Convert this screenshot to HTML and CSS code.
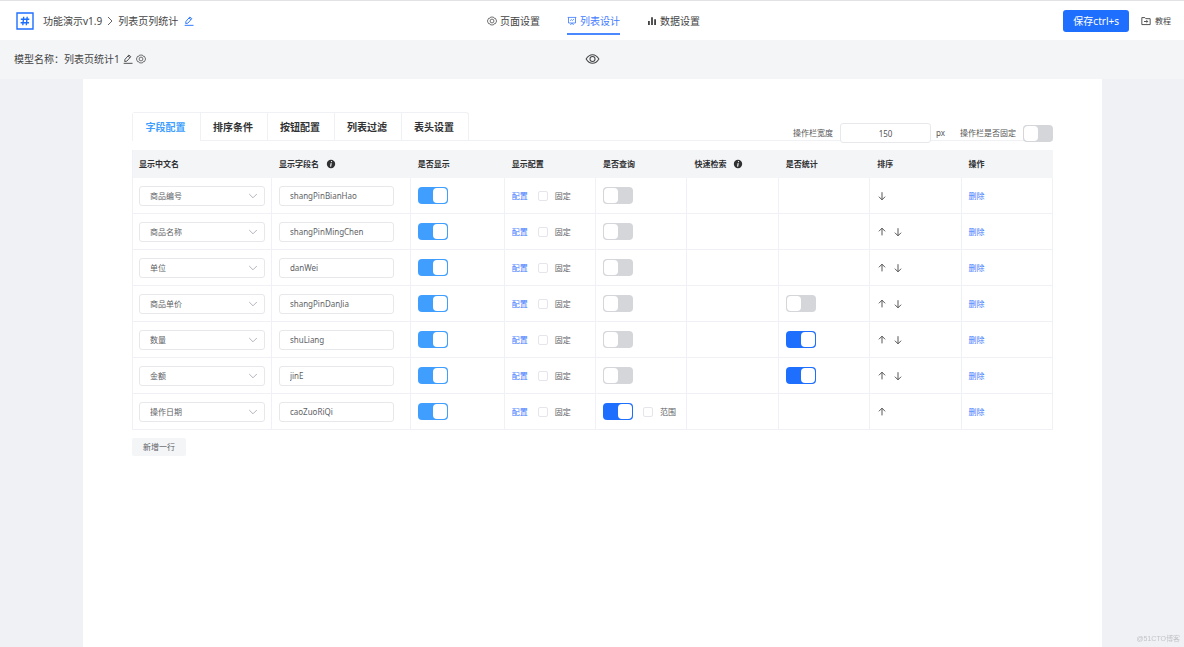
FILE: index.html
```html
<!DOCTYPE html>
<html lang="zh-CN">
<head>
<meta charset="utf-8">
<title>列表设计</title>
<link rel="stylesheet" href="styles.css">
</head>
<body>
<svg class="sprite" aria-hidden="true">
  <symbol id="i-pen" viewBox="0 0 12 12"><path d="M2 9 2.4 6.4 7 1.2 9.4 3.2 4.6 8.6 2 9ZM6 2.4 8.4 4.4M.8 11.2H11.4" fill="none" stroke="currentColor" stroke-width="1.1" stroke-linejoin="round"/></symbol>
  <symbol id="i-gear" viewBox="0 0 12 12"><path d="M4.3 1.3H7.7L8.6 2.7 10.2 2.9 11.5 6 10.2 9.1 8.6 9.3 7.7 10.7H4.3L3.4 9.3 1.8 9.1.5 6 1.8 2.9 3.4 2.7Z" fill="none" stroke="currentColor" stroke-width=".9" stroke-linejoin="round"/><circle cx="6" cy="6" r="2.3" fill="none" stroke="currentColor" stroke-width=".9"/></symbol>
  <symbol id="i-board" viewBox="0 0 12 12"><path d="M.8 1.7H11.2M1.8 1.7V8.4H10.2V1.7M4 10.8 6 8.6 8 10.8M3.8 5.6 5.2 4.3 6.4 5.4 8.3 3.7" fill="none" stroke="currentColor" stroke-width="1"/></symbol>
  <symbol id="i-bars" viewBox="0 0 12 12"><path d="M1.2 6H3.4V10.8H1.2ZM4.9 1.4H7.1V10.8H4.9ZM8.6 4H10.8V10.8H8.6Z" fill="currentColor"/></symbol>
  <symbol id="i-folder" viewBox="0 0 12 12"><path d="M1 1.9H4.6L5.8 3.2H11V10.3H1ZM3.6 6.6H8M6.5 5 8.1 6.6 6.5 8.2" fill="none" stroke="currentColor" stroke-width="1.1" stroke-linejoin="round"/></symbol>
  <symbol id="i-eye" viewBox="0 0 16 12"><path d="M1.2 6C3 3 5.3 1.4 8 1.4S13 3 14.8 6C13 9 10.7 10.6 8 10.6S3 9 1.2 6Z" fill="none" stroke="currentColor" stroke-width="1.1"/><circle cx="8" cy="6" r="2.7" fill="none" stroke="currentColor" stroke-width="1.1"/></symbol>
  <symbol id="i-down" viewBox="0 0 10 10"><path d="M5 1.2V8.8M1.9 5.7 5 8.8 8.1 5.7" fill="none" stroke="currentColor" stroke-width=".9"/></symbol>
  <symbol id="i-up" viewBox="0 0 10 10"><path d="M5 8.4V1.2M1.9 4.3 5 1.2 8.1 4.3" fill="none" stroke="currentColor" stroke-width=".9"/></symbol>
  <symbol id="i-chev" viewBox="0 0 10 10"><path d="M1.2 3 5 6.8 8.8 3" fill="none" stroke="currentColor" stroke-width=".9"/></symbol>
  <symbol id="i-right" viewBox="0 0 10 10"><path d="M3 1 7 5 3 9" fill="none" stroke="currentColor" stroke-width="1"/></symbol>
  <symbol id="i-info" viewBox="0 0 10 10"><circle cx="5" cy="5" r="4.2" fill="currentColor"/><path d="M5.6 2.2 5.4 3.2M5.2 4.2 4.6 7.6" stroke="#fff" stroke-width="1.1"/></symbol>
  <symbol id="i-logo" viewBox="0 0 18 18"><path d="M1 1H17V17H1Z" fill="#fff" stroke="currentColor" stroke-width="1.4"/><path d="M7.7 4.8 6.8 13.2M11.2 4.8 10.3 13.2M4.8 7.3H13.3M4.6 10.7H13" fill="none" stroke="currentColor" stroke-width="1.4"/></symbol>
</svg>

<header class="topbar">
  <div class="crumbs">
    <svg class="logo"><use href="#i-logo"/></svg>
    <span>功能演示v1.9</span>
    <svg class="icon-s muted"><use href="#i-right"/></svg>
    <span>列表页列统计</span>
    <button class="icon-btn blue" aria-label="编辑"><svg class="icon-s"><use href="#i-pen"/></svg></button>
  </div>
  <nav class="steps">
    <a href="#page"><svg class="icon-s"><use href="#i-gear"/></svg>页面设置</a>
    <a href="#list" class="active"><svg class="icon-s"><use href="#i-board"/></svg>列表设计</a>
    <a href="#data"><svg class="icon-s"><use href="#i-bars"/></svg>数据设置</a>
  </nav>
  <div class="actions">
    <button class="save">保存ctrl+s</button>
    <a class="guide" href="#guide"><svg class="icon-s"><use href="#i-folder"/></svg>教程</a>
  </div>
</header>

<div class="subbar">
  <div class="model">
    <span>模型名称：列表页统计1</span>
    <button class="icon-btn" aria-label="编辑模型"><svg class="icon-s"><use href="#i-pen"/></svg></button>
    <button class="icon-btn" aria-label="设置模型"><svg class="icon-s"><use href="#i-gear"/></svg></button>
  </div>
  <button class="icon-btn" aria-label="预览"><svg class="eye"><use href="#i-eye"/></svg></button>
</div>

<main class="panel">
  <div class="tabbar">
    <div class="tabs" role="tablist">
      <button role="tab" class="tab active" aria-selected="true">字段配置</button>
      <button role="tab" class="tab">排序条件</button>
      <button role="tab" class="tab">按钮配置</button>
      <button role="tab" class="tab">列表过滤</button>
      <button role="tab" class="tab">表头设置</button>
    </div>
    <div class="options">
      <label for="bar-width">操作栏宽度</label>
      <input id="bar-width" class="field width" value="150">
      <span class="unit">px</span>
      <label for="bar-fixed">操作栏是否固定</label>
      <input id="bar-fixed" class="switch" type="checkbox" role="switch">
    </div>
  </div>

  <table class="fields">
    <colgroup><col class="c-wide"><col class="c-wide"><col class="c-show"><col><col><col><col><col><col></colgroup>
    <thead>
      <tr><th>显示中文名</th><th><span class="hint">显示字段名<svg class="icon-s"><use href="#i-info"/></svg></span></th><th>是否显示</th><th>显示配置</th><th>是否查询</th><th><span class="hint">快速检索<svg class="icon-s"><use href="#i-info"/></svg></span></th><th>是否统计</th><th>排序</th><th>操作</th></tr>
    </thead>
    <tbody>
      <tr>
        <td><div class="pick"><select class="field" aria-label="显示中文名"><option>商品编号</option></select><svg class="icon-s"><use href="#i-chev"/></svg></div></td>
        <td><input class="field name" aria-label="显示字段名" value="shangPinBianHao"></td>
        <td><input class="switch sky" type="checkbox" role="switch" aria-label="是否显示" checked></td>
        <td><div class="set"><a href="#set">配置</a><label><input class="tick" type="checkbox">固定</label></div></td>
        <td><input class="switch" type="checkbox" role="switch" aria-label="是否查询"></td>
        <td></td><td></td>
        <td><div class="order"><button class="icon-btn" aria-label="下移"><svg class="icon-s"><use href="#i-down"/></svg></button></div></td>
        <td><a href="#del">删除</a></td>
      </tr>
      <tr>
        <td><div class="pick"><select class="field" aria-label="显示中文名"><option>商品名称</option></select><svg class="icon-s"><use href="#i-chev"/></svg></div></td>
        <td><input class="field name" aria-label="显示字段名" value="shangPinMingChen"></td>
        <td><input class="switch sky" type="checkbox" role="switch" aria-label="是否显示" checked></td>
        <td><div class="set"><a href="#set">配置</a><label><input class="tick" type="checkbox">固定</label></div></td>
        <td><input class="switch" type="checkbox" role="switch" aria-label="是否查询"></td>
        <td></td><td></td>
        <td><div class="order"><button class="icon-btn" aria-label="上移"><svg class="icon-s"><use href="#i-up"/></svg></button><button class="icon-btn" aria-label="下移"><svg class="icon-s"><use href="#i-down"/></svg></button></div></td>
        <td><a href="#del">删除</a></td>
      </tr>
      <tr>
        <td><div class="pick"><select class="field" aria-label="显示中文名"><option>单位</option></select><svg class="icon-s"><use href="#i-chev"/></svg></div></td>
        <td><input class="field name" aria-label="显示字段名" value="danWei"></td>
        <td><input class="switch sky" type="checkbox" role="switch" aria-label="是否显示" checked></td>
        <td><div class="set"><a href="#set">配置</a><label><input class="tick" type="checkbox">固定</label></div></td>
        <td><input class="switch" type="checkbox" role="switch" aria-label="是否查询"></td>
        <td></td><td></td>
        <td><div class="order"><button class="icon-btn" aria-label="上移"><svg class="icon-s"><use href="#i-up"/></svg></button><button class="icon-btn" aria-label="下移"><svg class="icon-s"><use href="#i-down"/></svg></button></div></td>
        <td><a href="#del">删除</a></td>
      </tr>
      <tr>
        <td><div class="pick"><select class="field" aria-label="显示中文名"><option>商品单价</option></select><svg class="icon-s"><use href="#i-chev"/></svg></div></td>
        <td><input class="field name" aria-label="显示字段名" value="shangPinDanJia"></td>
        <td><input class="switch sky" type="checkbox" role="switch" aria-label="是否显示" checked></td>
        <td><div class="set"><a href="#set">配置</a><label><input class="tick" type="checkbox">固定</label></div></td>
        <td><input class="switch" type="checkbox" role="switch" aria-label="是否查询"></td>
        <td></td>
        <td><input class="switch" type="checkbox" role="switch" aria-label="是否统计"></td>
        <td><div class="order"><button class="icon-btn" aria-label="上移"><svg class="icon-s"><use href="#i-up"/></svg></button><button class="icon-btn" aria-label="下移"><svg class="icon-s"><use href="#i-down"/></svg></button></div></td>
        <td><a href="#del">删除</a></td>
      </tr>
      <tr>
        <td><div class="pick"><select class="field" aria-label="显示中文名"><option>数量</option></select><svg class="icon-s"><use href="#i-chev"/></svg></div></td>
        <td><input class="field name" aria-label="显示字段名" value="shuLiang"></td>
        <td><input class="switch sky" type="checkbox" role="switch" aria-label="是否显示" checked></td>
        <td><div class="set"><a href="#set">配置</a><label><input class="tick" type="checkbox">固定</label></div></td>
        <td><input class="switch" type="checkbox" role="switch" aria-label="是否查询"></td>
        <td></td>
        <td><input class="switch" type="checkbox" role="switch" aria-label="是否统计" checked></td>
        <td><div class="order"><button class="icon-btn" aria-label="上移"><svg class="icon-s"><use href="#i-up"/></svg></button><button class="icon-btn" aria-label="下移"><svg class="icon-s"><use href="#i-down"/></svg></button></div></td>
        <td><a href="#del">删除</a></td>
      </tr>
      <tr>
        <td><div class="pick"><select class="field" aria-label="显示中文名"><option>金额</option></select><svg class="icon-s"><use href="#i-chev"/></svg></div></td>
        <td><input class="field name" aria-label="显示字段名" value="jinE"></td>
        <td><input class="switch sky" type="checkbox" role="switch" aria-label="是否显示" checked></td>
        <td><div class="set"><a href="#set">配置</a><label><input class="tick" type="checkbox">固定</label></div></td>
        <td><input class="switch" type="checkbox" role="switch" aria-label="是否查询"></td>
        <td></td>
        <td><input class="switch" type="checkbox" role="switch" aria-label="是否统计" checked></td>
        <td><div class="order"><button class="icon-btn" aria-label="上移"><svg class="icon-s"><use href="#i-up"/></svg></button><button class="icon-btn" aria-label="下移"><svg class="icon-s"><use href="#i-down"/></svg></button></div></td>
        <td><a href="#del">删除</a></td>
      </tr>
      <tr>
        <td><div class="pick"><select class="field" aria-label="显示中文名"><option>操作日期</option></select><svg class="icon-s"><use href="#i-chev"/></svg></div></td>
        <td><input class="field name" aria-label="显示字段名" value="caoZuoRiQi"></td>
        <td><input class="switch sky" type="checkbox" role="switch" aria-label="是否显示" checked></td>
        <td><div class="set"><a href="#set">配置</a><label><input class="tick" type="checkbox">固定</label></div></td>
        <td><div class="set"><input class="switch" type="checkbox" role="switch" aria-label="是否查询" checked><label><input class="tick" type="checkbox">范围</label></div></td>
        <td></td><td></td>
        <td><div class="order"><button class="icon-btn" aria-label="上移"><svg class="icon-s"><use href="#i-up"/></svg></button></div></td>
        <td><a href="#del">删除</a></td>
      </tr>
    </tbody>
  </table>
  <button class="add">新增一行</button>
</main>
<div class="watermark">@51CTO博客</div>
</body>
</html>
```
FILE: styles.css
```css
* { box-sizing: border-box; }
body {
  margin: 0;
  min-height: 100vh;
  display: flex;
  flex-direction: column;
  background: #f0f1f5;
  color: #606266;
  font-family: "Noto Sans", "Noto Sans CJK SC", sans-serif;
  font-size: 8px;
  line-height: 12px;
}
button, input, select { font: inherit; color: inherit; margin: 0; }
button { border: 0; padding: 0; background: none; cursor: pointer; }
a { color: #3f7cff; text-decoration: none; }
svg { display: block; flex: none; }
.sprite { position: absolute; width: 0; height: 0; }
.icon-s { width: 10px; height: 10px; }
.icon-btn { color: #444; }
.icon-btn.blue { color: #1f6fff; }
.muted { color: #666; }

.topbar {
  display: grid;
  grid-template-columns: 1fr auto 1fr;
  height: 40px;
  padding: 0 13px 0 16px;
  border-top: 1px solid #e2e2e4;
  background: #fff;
  color: #444;
  font-size: 10px;
}
.crumbs { display: flex; align-items: center; gap: 3px; }
.logo { width: 18px; height: 18px; margin-right: 6px; color: #1f6fff; }
.crumbs .icon-btn { margin-left: 3px; }
.steps { display: flex; gap: 27px; }
.steps a {
  display: flex;
  align-items: center;
  gap: 3px;
  margin-bottom: 5px;
  padding-top: 7px;
  border-bottom: 2px solid transparent;
  color: #444;
}
.steps a.active { color: #3f7cff; border-color: #4a88ff; }
.actions { display: flex; align-items: center; justify-content: flex-end; gap: 12px; }
.save {
  height: 22px;
  padding: 0 10px;
  border-radius: 3px;
  background: #1f6fff;
  color: #fff;
}
.guide { display: flex; align-items: center; gap: 4px; color: #444; font-size: 8px; }

.subbar {
  display: grid;
  grid-template-columns: 1fr auto 1fr;
  align-items: center;
  height: 39px;
  padding: 0 14px 2px;
  background: #f4f5f7;
  color: #444;
  font-size: 10px;
}
.model { display: flex; align-items: center; gap: 3px; }
.eye { width: 15px; height: 12px; }

.panel { flex: 1; margin: 0 82px 0 83px; padding: 33px 49px; background: #fff; }
.tabbar {
  display: flex;
  align-items: flex-end;
  justify-content: space-between;
  border-bottom: 1px solid #eff1f5;
}
.tabs {
  display: flex;
  margin-bottom: -1px;
  border: 1px solid #eff1f5;
  border-bottom: 0;
  border-radius: 3px 3px 0 0;
}
.tab {
  width: 67px;
  height: 28px;
  padding-right: 2px;
  border-left: 1px solid #eff1f5;
  border-bottom: 1px solid #eff1f5;
  color: #303133;
  font-size: 10px;
  font-weight: 700;
}
.tab:first-child { border-left: 0; }
.tab.active { background: #fff; border-bottom-color: #fff; color: #409eff; }
.options { display: flex; align-items: center; gap: 7px; margin-bottom: -3px; color: #555; }
.unit { margin: 0 8px 0 -2px; }

.field {
  display: block;
  height: 20px;
  padding: 0 10px;
  border: 1px solid #e6e8ec;
  border-radius: 3px;
  background: #fff;
  appearance: none;
  width: 100%;
}
.field.width { width: 91px; text-align: center; }
.field.name { width: 115px; }
.pick { display: grid; align-items: center; }
.pick > * { grid-area: 1 / 1; }
.pick svg { justify-self: end; margin-right: 7px; color: #a8abb2; pointer-events: none; }

.switch {
  display: block;
  flex: none;
  width: 30px;
  height: 17px;
  padding: 1px;
  border-radius: 4px;
  background: #d5d6da;
  appearance: none;
}
.switch::before {
  content: "";
  display: block;
  width: 14px;
  height: 15px;
  border-radius: 4px;
  background: #fff;
}
.switch:checked { background: #1f6fff; }
.switch.sky:checked { background: #409eff; }
.switch:checked::before { margin-left: auto; }
.tick {
  width: 10px;
  height: 10px;
  border: 1px solid #e4e6eb;
  border-radius: 2px;
  background: #fff;
  appearance: none;
}

.fields {
  width: 100%;
  margin-top: 9px;
  border-spacing: 0;
  border-left: 1px solid #eff1f6;
  table-layout: fixed;
}
.c-wide { width: 15.1%; }
.c-show { width: 10.2%; }
.fields th {
  height: 28px;
  padding: 0 7px;
  background: #f4f5f7;
  color: #303133;
  text-align: left;
  font-weight: 700;
}
.fields td {
  height: 36px;
  padding: 0 6px 0 7px;
  border-right: 1px solid #eff1f6;
  border-bottom: 1px solid #eff1f6;
}
.fields th:first-child, .fields td:first-child { padding-left: 6px; }
.hint { display: flex; align-items: center; gap: 7px; }
.set { display: flex; align-items: center; gap: 10px; }
.set label { display: flex; align-items: center; gap: 7px; }
.order { display: flex; gap: 6px; }
.add {
  height: 18px;
  margin-top: 8px;
  padding: 0 11px;
  border-radius: 2px;
  background: #f4f5f7;
}
.watermark {
  position: fixed;
  right: 4px;
  bottom: 2px;
  color: #c2c4c9;
  font-family: "Liberation Sans", "Noto Sans CJK SC", sans-serif;
  font-size: 7px;
}
```
